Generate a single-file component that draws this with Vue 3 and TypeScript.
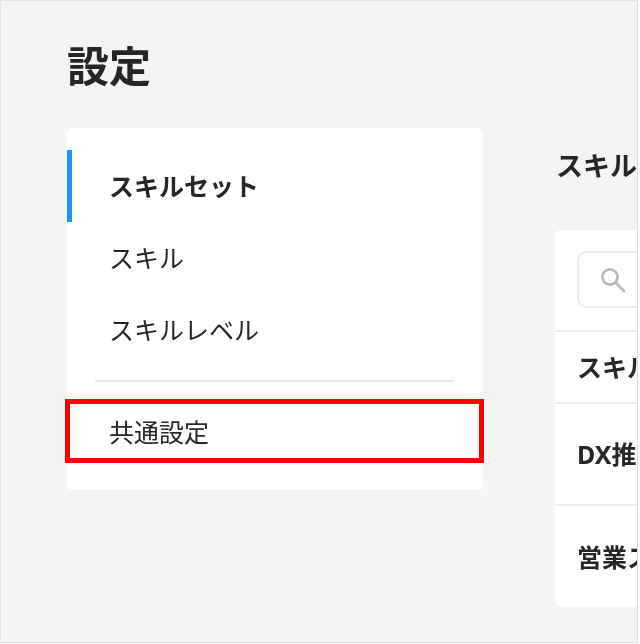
<script setup lang="ts">
const navItems = [
  { label: 'スキルセット', active: true },
  { label: 'スキル', active: false },
  { label: 'スキルレベル', active: false }
]

const rows = ['DX推進スキルセット', '営業スキルセット']
</script>

<template>
  <div class="frame">
    <h1 class="page-title"><span class="soft">設定</span></h1>

    <div class="columns">
      <nav class="side-card">
        <a
          v-for="item in navItems"
          :key="item.label"
          class="nav-item"
          :class="{ active: item.active }"
        >
          <span class="soft">{{ item.label }}</span>
        </a>

        <div class="divider"></div>

        <a class="nav-item common">
          <span class="soft">共通設定</span>
          <span class="highlight"></span>
        </a>
      </nav>

      <section class="content">
        <h2 class="content-title"><span class="soft">スキルセット</span></h2>

        <div class="table-card">
          <div class="search-row">
            <div class="search-box">
              <svg class="soft" width="26" height="26" viewBox="0 0 26 26" fill="none" stroke="#b9b9b9" stroke-width="2.8">
                <circle cx="10" cy="10" r="7.6" />
                <path d="M15.6 15.6l8.4 8.4" stroke-linecap="round" />
              </svg>
            </div>
          </div>

          <div class="row head"><span class="soft">スキルセット名</span></div>
          <div v-for="row in rows" :key="row" class="row"><span class="soft">{{ row }}</span></div>
        </div>
      </section>
    </div>
  </div>
</template>

<style>
html,
body {
  background: #ffffff;
}
</style>

<style scoped>
.frame {
  box-sizing: border-box;
  width: 638px;
  height: 643px;
  overflow: hidden;
  padding: 0 0 0 66px;
  background: #f3f4f6;
  border-top: 1px solid #e3e3e3;
  border-left: 1px solid #e3e3e3;
  border-right: 1px solid #dcdcdc;
  border-bottom: 1px solid #dcdcdc;
  font-family: "Noto Sans", "Noto Sans CJK JP", sans-serif;
  color: #262626;
}

.soft {
  display: inline-block;
  filter: blur(0.45px);
  white-space: nowrap;
}

.page-title {
  margin: 0;
  padding-top: 37px;
  height: 127px;
  box-sizing: border-box;
  font-size: 42px;
  line-height: 56px;
  font-weight: 700;
}

.columns {
  display: flex;
  align-items: flex-start;
  gap: 72px;
  width: 800px;
}

.side-card {
  box-sizing: border-box;
  flex: none;
  width: 416px;
  height: 362px;
  padding-top: 22px;
  background: #ffffff;
  border-radius: 6px;
}

.nav-item {
  display: flex;
  align-items: center;
  box-sizing: border-box;
  height: 72px;
  padding-left: 42px;
  font-size: 25px;
  line-height: 36px;
}

.nav-item.active {
  border-left: 5px solid #1e90ff;
  padding-left: 37px;
  font-weight: 700;
}

.divider {
  height: 2px;
  margin: 14px 29px 17px 28px;
  background: #e6e9ef;
}

.nav-item.common {
  position: relative;
  height: 64px;
  padding-top: 2px;
}

.highlight {
  position: absolute;
  inset: 0 -1px 0 -2px;
  border: 5px solid #ff0000;
}

.content {
  flex: none;
  width: 400px;
}

.content-title {
  margin: 0;
  height: 102px;
  padding-top: 20px;
  padding-left: 1px;
  box-sizing: border-box;
  font-size: 27px;
  line-height: 36px;
  font-weight: 700;
}

.table-card {
  overflow: hidden;
  background: #ffffff;
  border-radius: 6px;
}

.search-row {
  box-sizing: border-box;
  height: 100px;
  padding: 21px 22px 0;
}

.search-box {
  display: flex;
  align-items: center;
  box-sizing: border-box;
  height: 57px;
  padding-left: 21px;
  border: 2px solid #e8ebf0;
  border-radius: 10px;
}

.row {
  display: flex;
  align-items: center;
  box-sizing: border-box;
  height: 102px;
  padding: 0 0 2px 22px;
  border-top: 2px solid #e9ecf1;
  font-size: 25px;
  font-weight: 700;
}

.row.head {
  height: 72px;
}

.row:last-child {
  height: 103px;
}
</style>
